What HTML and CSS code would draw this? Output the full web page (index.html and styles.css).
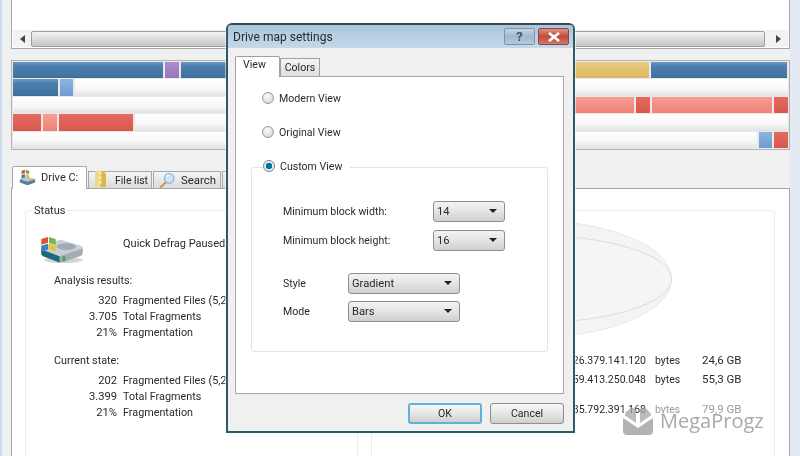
FILE: index.html
```html
<!DOCTYPE html>
<html lang="en">
<head>
<meta charset="utf-8">
<title>Drive map settings</title>
<link rel="stylesheet" href="styles.css">
</head>
<body>
<div class="screen">
  <main class="window">
    <section class="top-panel">
      <div class="scrollbar">
        <span class="arrow arrow-left"></span>
        <span class="thumb"></span>
        <span class="arrow arrow-right"></span>
      </div>
    </section>

    <section class="map">
      <div class="map-row">
        <i class="seg blue" style="width:150px"></i><i class="seg purple" style="width:14px"></i><i class="seg blue" style="width:217px"></i><i class="seg gold" style="width:249px"></i><i class="seg blue" style="width:136px"></i>
      </div>
      <div class="map-row">
        <i class="seg blue" style="width:45px"></i><i class="seg lightblue" style="width:13px"></i><i class="seg empty"></i>
      </div>
      <div class="map-row">
        <i class="seg empty"></i><i class="seg pink" style="width:60px"></i><i class="seg red" style="width:14px"></i><i class="seg pink" style="width:120px"></i><i class="seg red" style="width:14px"></i>
      </div>
      <div class="map-row">
        <i class="seg red" style="width:28px"></i><i class="seg pink" style="width:14px"></i><i class="seg red" style="width:74px"></i><i class="seg empty"></i>
      </div>
      <div class="map-row">
        <i class="seg empty"></i><i class="seg lightblue" style="width:13px"></i><i class="seg red" style="width:14px"></i>
      </div>
    </section>

    <nav class="main-tabs">
      <div class="main-tab active">
        <svg class="tab-icon" viewBox="0 0 20 20"><path d="M1 12l7-3 11 3v4l-9 3-9-3z" fill="#5b7f92"/><path d="M1 12l9 3 9-3-11-3z" fill="#b9c7d1"/><path d="M3 2l4-1v4l-4 1z" fill="#d9562f"/><path d="M8 1l4 1v4l-4-1z" fill="#6fae3c"/><path d="M3 7l4-1v4l-4 1z" fill="#3d7fc4"/><path d="M8 6l4 1v4l-4-1z" fill="#e8bd35"/></svg>
        <span>Drive C:</span>
      </div>
      <div class="main-tab">
        <svg class="tab-icon folder" viewBox="0 0 14 20"><path d="M1 1h8l4 3v15H1z" fill="#efd987"/><path d="M7 1h2l4 3v15H7z" fill="#dcb649"/><path d="M6 2h2v3H6zm0 5h2v3H6zm0 5h2v3H6z" fill="#f8efc4"/></svg>
        <span>File list</span>
      </div>
      <div class="main-tab search">
        <svg class="tab-icon" viewBox="0 0 20 20"><path d="M2 18l6-6" stroke="#c99a55" stroke-width="2.500" stroke-linecap="round"/><circle cx="12" cy="7.500" r="5.500" fill="#cfe3f5" stroke="#8fb4d6" stroke-width="1.500"/><path d="M9 6a3.500 3.500 0 0 1 3-2.500" stroke="#fff" stroke-width="1.500" fill="none"/></svg>
        <span>Search</span>
      </div>
      <div class="main-tab stub"></div>
    </nav>

    <section class="tab-body">
      <div class="group status">
        <h2 class="legend">Status</h2>
        <div class="status-head">
          <svg class="drive-icon" viewBox="0 0 48 28">
            <ellipse cx="26" cy="25" rx="20" ry="3" fill="#d4d4d4"/>
            <path d="M3 13q0-2 3-3l14-5q3-1 6 0l17 5q3 1 3 3v5q0 2-3 3l-17 6q-3 1-5 0L5 21q-2-1-2-3z" fill="#a3adb3"/>
            <path d="M3 14l19 7v6.500L5 21q-2-1-2-3z" fill="#1d6a7c"/>
            <path d="M3 13q0-2 3-3l14-5q3-1 6 0l17 5q3 1 3 3L22 21z" fill="#c8d0d5"/>
            <ellipse cx="29" cy="11" rx="10" ry="3.500" fill="#9fabb3"/>
            <rect x="25" y="21" width="3" height="5" fill="#3fae4a"/>
            <path d="M3 3l7-2v6L3 9z" fill="#d9562f"/>
            <path d="M11 1l7 2v6l-7-2z" fill="#7ab648"/>
            <path d="M3 10l7-2v6l-7 2z" fill="#3d7fc4"/>
            <path d="M11 8l7 2v6l-7-2z" fill="#ecc23c"/>
          </svg>
          <span>Quick Defrag Paused</span>
        </div>
        <h3 class="block-title">Analysis results:</h3>
        <ul class="stats">
          <li><b>320</b><span>Fragmented Files (5,2%)</span></li>
          <li><b>3.705</b><span>Total Fragments</span></li>
          <li><b>21%</b><span>Fragmentation</span></li>
        </ul>
        <h3 class="block-title second">Current state:</h3>
        <ul class="stats">
          <li><b>202</b><span>Fragmented Files (5,2%)</span></li>
          <li><b>3.399</b><span>Total Fragments</span></li>
          <li><b>21%</b><span>Fragmentation</span></li>
        </ul>
      </div>

      <div class="group usage">
        <svg class="pie" viewBox="0 0 404 130">
          <ellipse cx="160" cy="68" rx="141" ry="59" fill="#f4f4f6" stroke="#e8e8ea"/>
          <path d="M19 68a141 44 0 0 0 282 0a141 44 0 0 0-282 0z" fill="#f5f5f7" stroke="#dcdcde"/>
        </svg>
        <div class="sizes">
          <div class="size-row"><span class="num">26.379.141.120</span><span class="unit">bytes</span><span class="gb">24,6 GB</span></div>
          <div class="size-row"><span class="num">59.413.250.048</span><span class="unit">bytes</span><span class="gb">55,3 GB</span></div>
          <div class="size-row total"><span class="num">85.792.391.168</span><span class="unit">bytes</span><span class="gb">79,9 GB</span></div>
        </div>
      </div>
    </section>
  </main>

  <section class="dialog">
    <header class="titlebar">
      <span class="title">Drive map settings</span>
      <span class="caption help">?</span>
      <span class="caption close">
        <svg viewBox="0 0 14 10" class="close-x"><path d="M2 1l10 8M12 1L2 9" stroke="#fff" stroke-width="2.600" fill="none"/></svg>
      </span>
    </header>
    <div class="client">
      <div class="dlg-tabs">
        <div class="dlg-tab active">View</div>
        <div class="dlg-tab">Colors</div>
      </div>
      <div class="dlg-page">
        <label class="radio-row"><span class="radio"></span>Modern View</label>
        <label class="radio-row"><span class="radio"></span>Original View</label>
        <div class="custom-group">
          <label class="radio-row legend-radio"><span class="radio on"></span>Custom View</label>
          <div class="field wide"><span>Minimum block width:</span><span class="select small">14<i class="caret"></i></span></div>
          <div class="field wide"><span>Minimum block height:</span><span class="select small">16<i class="caret"></i></span></div>
          <div class="field narrow first"><span>Style</span><span class="select large">Gradient<i class="caret"></i></span></div>
          <div class="field narrow"><span>Mode</span><span class="select large">Bars<i class="caret"></i></span></div>
        </div>
      </div>
      <div class="dlg-buttons">
        <button class="btn default">OK</button>
        <button class="btn">Cancel</button>
      </div>
    </div>
  </section>

  <aside class="watermark">
    <svg class="wm-logo" viewBox="0 0 30 30">
      <path d="M0 13l15 10 15-10v13a4 4 0 0 1-4 4H4a4 4 0 0 1-4-4z" fill="#b2b2b2"/>
      <path d="M2 9l6-7 5 2v14L2 10.500zM28 9l-6-7-5 2v14l11-7.500z" fill="#a6a6a6" opacity=".75"/>
    </svg>
    <span>MegaProgz</span>
  </aside>
</div>
</body>
</html>
```

FILE: styles.css
```css
* { box-sizing: border-box; }

html, body { margin: 0; padding: 0; }

body {
  font-family: Roboto, "Noto Sans", sans-serif;
  font-size: 11px;
  color: #2a2a2a;
  background: #f0f0f0;
}

.screen {
  position: relative;
  width: 800px;
  height: 456px;
  overflow: hidden;
  background: #f0f0f0;
  border-left: 2px solid #cddcee;
  filter: blur(0.35px);
}

.window {
  width: 797px;
  height: 456px;
  margin-left: 1px;
  padding: 0 0 0 8px;
  border-right: 10px solid #e3eaf3;
}

/* top list panel */
.top-panel {
  height: 49px;
  background: #fff;
  border: 1px solid #a6a6a6;
  border-top: 0;
  display: flex;
  align-items: flex-end;
}

.scrollbar {
  flex: 1;
  height: 17px;
  margin: 0 1px 1px;
  background: #f2f2f2;
  display: flex;
  align-items: center;
  padding: 0 7px;
}

.thumb {
  flex: 1;
  height: 16px;
  margin: 0 11px 0 6px;
  border: 1px solid #9e9e9e;
  border-radius: 2px;
  background: linear-gradient(#f3f3f3, #d9d9d9 55%, #c6c6c6);
}

.arrow { width: 0; height: 0; border-top: 4px solid transparent; border-bottom: 4px solid transparent; }
.arrow-left { border-right: 5px solid #444; }
.arrow-right { border-left: 5px solid #444; }

/* block map */
.map {
  margin-top: 11px;
  height: 90px;
  background: #e9e9e9;
  border: 1px solid #b4b4b4;
  padding: 1px;
  display: flex;
  flex-direction: column;
  gap: 1px;
}

.map-row { flex: 1; display: flex; gap: 2px; }

.seg { display: block; flex: none; }

.seg.empty { flex: 1; background: linear-gradient(#fff, #f7f7f7 60%, #e2e2e2); }
.seg.blue { background: linear-gradient(#6d9ac4, #4a7fb0 25%, #43749f 90%, #3a6a94); }
.seg.lightblue { background: linear-gradient(#8fb4dc, #6b9bcf); }
.seg.purple { background: linear-gradient(#b08ccc, #9a72bd); }
.seg.gold { background: linear-gradient(#e9cb7f, #dcb75f); }
.seg.pink { background: linear-gradient(#f79f94, #f27f73); }
.seg.red { background: linear-gradient(#e76a5f, #d7574d); }

/* main tabs */
.main-tabs {
  margin-top: 16px;
  height: 22px;
  display: flex;
  align-items: flex-end;
  padding-left: 1px;
  position: relative;
  z-index: 1;
}

.main-tab {
  height: 17px;
  margin-right: 1px;
  padding: 0 0 0 5px;
  display: flex;
  align-items: center;
  gap: 8px;
  font-size: 11px;
  white-space: nowrap;
  background: linear-gradient(#f4f4f4, #dcdcdc);
  border: 1px solid #a6a6a6;
  border-bottom: 0;
}

.main-tab:nth-child(2) { width: 64px; font-size: 10.5px; }
.main-tab:nth-child(3) { width: 68px; }
.main-tab.search { gap: 5px; font-size: 11.4px; }

.main-tab.active {
  width: 75px;
  height: 23px;
  margin-bottom: -1px;
  background: #fff;
  border-radius: 2px 2px 0 0;
  gap: 5px;
  padding: 0 0 2px 6px;
}

.main-tab.stub { width: 20px; }

.tab-icon { width: 17px; height: 17px; flex: none; }
.tab-icon.folder { width: 13px; height: 18px; margin-top: -2px; }

.tab-body {
  height: 300px;
  background: #fff;
  border: 1px solid #a6a6a6;
  padding: 21px 13px 0;
  display: grid;
  grid-template-columns: 333px 404px;
  gap: 13px;
}

.group {
  height: 290px;
  border: 1px solid #ececec;
  border-radius: 3px;
  position: relative;
}

.legend {
  position: absolute;
  top: -8px;
  left: 6px;
  margin: 0;
  padding: 0 2px;
  background: #fff;
  font: inherit;
  font-size: 11px;
  line-height: 15px;
}

.status-head {
  display: flex;
  align-items: flex-start;
  height: 27px;
  margin: 25px 0 0 12px;
  font-size: 11px;
  line-height: 16px;
}

.status-head span { margin: 0 0 0 38px; }

.drive-icon { width: 47px; height: 27px; flex: none; }

.block-title {
  margin: 10px 0 0 28px;
  font: inherit;
  font-size: 10.8px;
  line-height: 16px;
}

.block-title.second { margin-top: 12px; }

.stats { list-style: none; margin: 4px 0 0; padding: 0; }

.stats li { display: flex; height: 16px; line-height: 16px; font-size: 10.8px; white-space: nowrap; }

.stats b { font-weight: 400; font-size: 11.2px; width: 91px; text-align: right; margin-right: 6px; flex: none; }

.usage .pie { display: block; width: 402px; height: 130px; }

.sizes { margin-top: 10px; }

.size-row { display: flex; height: 19px; line-height: 19px; font-size: 11.5px; }

.size-row.total { margin-top: 11px; }

.size-row.total .unit, .size-row.total .gb { color: #9a9a9a; }

.num { width: 274px; text-align: right; font-size: 10.5px; }
.unit { width: 47px; margin-left: 9px; font-size: 10.5px; }

/* dialog */
.dialog {
  position: absolute;
  left: 224px;
  top: 23px;
  width: 349px;
  height: 410px;
  background: #f0f0f0;
  border: 2px solid #2c5a6a;
  border-top-color: #3a4a55;
  border-radius: 6px 6px 0 0;
  box-shadow: 0 0 0 1px rgba(255, 255, 255, .5);
  display: flex;
  flex-direction: column;
  z-index: 3;
}

.titlebar {
  height: 23px;
  flex: none;
  padding: 3px 4px 0 5px;
  display: flex;
  gap: 3px;
  background: linear-gradient(#a9c6dc, #c4d9ea);
  border-radius: 4px 4px 0 0;
}

.title { flex: 1; font-size: 12px; line-height: 18px; }

.caption {
  width: 31px;
  height: 17px;
  border: 1px solid #7d93a6;
  border-radius: 2px;
  display: flex;
  align-items: center;
  justify-content: center;
  color: #44505c;
  font-size: 13px;
  font-weight: 700;
}

.help { background: linear-gradient(#c4d6e4, #9db9d0 50%, #b3cadb); }
.close { background: linear-gradient(#df8f85, #c2493b 50%, #d6766a); border-color: #8a4a44; }
.close-x { width: 14px; height: 10px; }

.client {
  flex: 1;
  display: flex;
  flex-direction: column;
  padding: 8px 9px 0 7px;
}

.dlg-tabs { display: flex; align-items: flex-end; height: 20px; position: relative; z-index: 1; }

.dlg-tab {
  height: 18px;
  width: 40px;
  background: linear-gradient(#f5f5f5, #dedede);
  border: 1px solid #a0a0a0;
  border-bottom: 0;
  text-align: center;
  line-height: 17px;
  font-size: 10.6px;
}

.dlg-tab.active {
  width: 45px;
  height: 21px;
  margin-bottom: -1px;
  padding-right: 6px;
  background: #fff;
  line-height: 16px;
  border-radius: 2px 2px 0 0;
}

.dlg-page {
  height: 318px;
  background: #fff;
  border: 1px solid #a8a8a8;
  padding: 12px 0 0 26px;
}

.radio-row {
  display: flex;
  align-items: center;
  gap: 5px;
  height: 18px;
  font-size: 10.6px;
  margin-bottom: 16px;
}

.radio {
  width: 12px;
  height: 12px;
  border-radius: 50%;
  border: 1px solid #9a9a9a;
  background: radial-gradient(circle at 40% 35%, #fbfbfb, #d0d0d0);
  flex: none;
}

.radio.on { background: radial-gradient(circle, #0d6ea8 0 3px, #e9eef2 3.500px); border-color: #6f8493; }

.custom-group {
  position: relative;
  width: 297px;
  height: 185px;
  margin: 26px 0 0 -11px;
  border: 1px solid #e3e3e3;
  border-radius: 3px;
  padding: 32px 0 0 31px;
}

.legend-radio {
  position: absolute;
  top: -11px;
  left: 11px;
  margin: 0;
  padding: 0 8px 0 0;
  background: #fff;
}

.field { display: flex; align-items: center; font-size: 10.6px; }

.field.wide { height: 22px; margin-bottom: 7px; }
.field.wide span:first-child { width: 150px; }

.field.narrow { height: 22px; margin-bottom: 6px; }
.field.narrow span:first-child { width: 65px; padding-top: 1px; }
.field.first { margin-top: 21px; }

.select {
  position: relative;
  height: 21px;
  border: 1px solid #8e8e8e;
  border-radius: 3px;
  background: linear-gradient(#f3f3f3, #e4e4e4 50%, #cfcfcf);
  padding-left: 3px;
  line-height: 20px;
  font-size: 11.2px;
}

.select.small { width: 72px; }
.select.large { width: 112px; }

.caret {
  position: absolute;
  right: 7px;
  top: 7px;
  border-left: 4px solid transparent;
  border-right: 4px solid transparent;
  border-top: 4px solid #222;
}

.dlg-buttons { display: flex; justify-content: flex-end; gap: 8px; padding: 9px 0 0; }

.btn {
  width: 74px;
  height: 21px;
  padding: 0;
  border: 1px solid #8f8f8f;
  border-radius: 3px;
  background: linear-gradient(#f6f6f6, #e6e6e6 50%, #cfcfcf);
  font: inherit;
  font-size: 10.6px;
  color: #2a2a2a;
}

.btn.default { border: 2px solid #5fb3d4; }

/* watermark */
.watermark {
  position: absolute;
  left: 621px;
  top: 405px;
  display: flex;
  align-items: center;
  gap: 7px;
  color: #a9a9a9;
  font-family: "Open Sans", sans-serif;
  font-size: 20px;
  font-weight: 500;
  z-index: 4;
}

.wm-logo { width: 30px; height: 30px; }
```
